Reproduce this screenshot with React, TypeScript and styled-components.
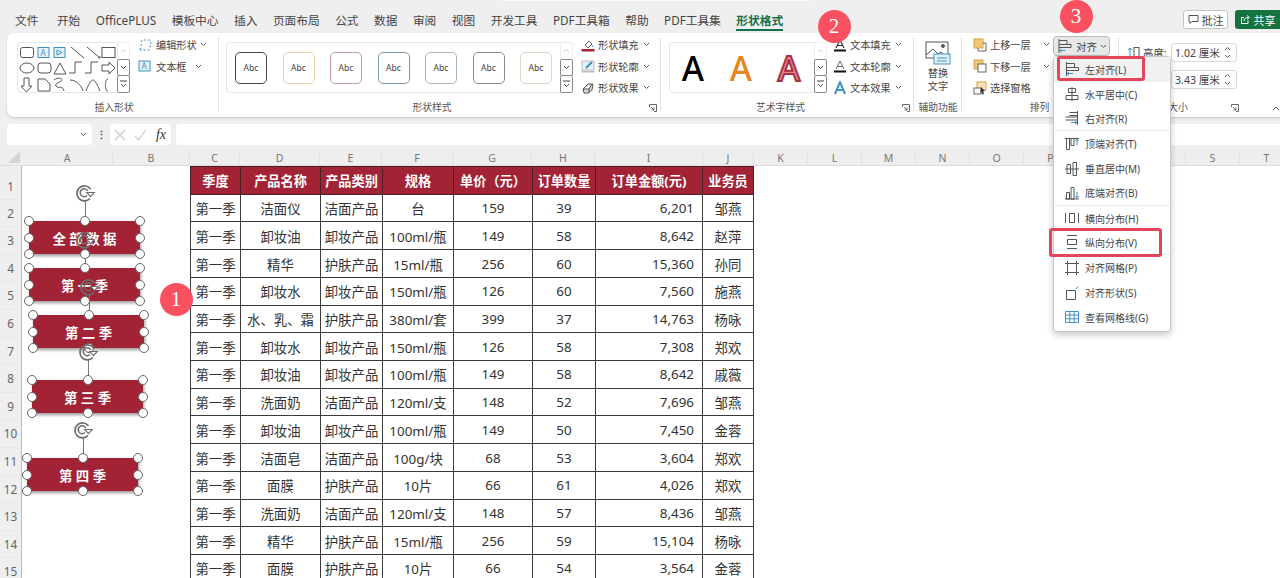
import React from "react";
import styled, { createGlobalStyle } from "styled-components";

const FONT = `"Noto Sans", "Noto Sans CJK SC", sans-serif`;
const TEXT = "#444";
const BLUE = "#3f93c4";
const WINE = "#a12335";

const GlobalStyle = createGlobalStyle`
  html, body { margin: 0; padding: 0; background: #efefef; }
  body { font-family: ${FONT}; color: ${TEXT}; }
  * { box-sizing: border-box; }
`;

const Page = styled.div`
  position: relative;
  width: 1280px;
  height: 578px;
  overflow: hidden;
  background: #efefef;
  display: flex;
  flex-direction: column;
`;

const SearchEdge = styled.div`
  position: absolute;
  left: 502px;
  top: 0;
  width: 308px;
  height: 1px;
  background: #f9f9f9;
`;

/* tabs */
const TabBar = styled.div`
  height: 33px;
  flex: none;
  display: flex;
  align-items: flex-start;
  gap: 15.5px;
  padding: 11px 0 0 15px;
`;

const Tab = styled.div<{ $active?: boolean }>`
  height: 20px;
  font-size: 11.7px;
  line-height: 18px;
  white-space: nowrap;
  font-weight: ${(p) => (p.$active ? 700 : 400)};
  color: ${(p) => (p.$active ? "#13704a" : TEXT)};
  border-bottom: ${(p) => (p.$active ? "2px solid #13704a" : "none")};
  &:first-child {
    margin-right: 3px;
  }
`;

const TopActions = styled.div`
  margin-left: auto;
  display: flex;
  gap: 7px;
  margin-top: -1px;
`;

const CommentButton = styled.div`
  width: 45px;
  height: 19px;
  background: #fff;
  border: 1px solid #c4c4c4;
  border-radius: 3px;
  display: flex;
  align-items: center;
  justify-content: center;
  gap: 3px;
  font-size: 11px;
`;

const ShareButton = styled(CommentButton)`
  background: #14733f;
  border: none;
  border-radius: 3px 0 0 3px;
  color: #fff;
`;

/* ribbon */
const Ribbon = styled.div`
  height: 84px;
  flex: none;
  margin-left: 7px;
  background: #fff;
  border-radius: 7px 0 0 7px;
  box-shadow: 0 1px 2px rgba(0, 0, 0, 0.18);
  display: flex;
  position: relative;
`;

const Group = styled.div<{ $w: number }>`
  position: relative;
  width: ${(p) => p.$w}px;
  flex: none;
  display: flex;
  flex-direction: column;
  &:not(:last-of-type)::after {
    content: "";
    position: absolute;
    right: 0;
    top: 4px;
    bottom: 5px;
    width: 1px;
    background: #e3e3e3;
  }
`;

const GroupBody = styled.div<{ $left: number }>`
  height: 67px;
  flex: none;
  display: flex;
  padding: 1px 0 0 ${(p) => p.$left}px;
`;

const GroupLabel = styled.div<{ $dx?: number }>`
  font-size: 9.8px;
  line-height: 14px;
  padding-top: 1px;
  text-align: center;
  color: #555;
  white-space: nowrap;
  transform: translateX(${(p) => p.$dx ?? 0}px);
`;

const Launcher = styled.svg`
  position: absolute;
  right: 4px;
  bottom: 5px;
`;

const Gallery = styled.div<{ $w: number }>`
  width: ${(p) => p.$w}px;
  height: 51px;
  flex: none;
  margin-top: 8px;
  display: flex;
  justify-content: space-between;
  background: #fff;
  border: 1px solid #e6e6e6;
  border-radius: 4px;
`;

const GalleryItems = styled.div<{ $gap: number; $left: number }>`
  display: flex;
  align-items: center;
  gap: ${(p) => p.$gap}px;
  padding-left: ${(p) => p.$left}px;
`;

const ScrollColumn = styled.div`
  width: 13px;
  flex: none;
  display: flex;
  flex-direction: column;
  margin: -1px -1px -1px 0;
`;

const ScrollButton = styled.div<{ $boxed?: boolean }>`
  flex: 1;
  display: flex;
  align-items: center;
  justify-content: center;
  border: 1px solid ${(p) => (p.$boxed ? "#8a8a8a" : "#eee")};
  margin-top: ${(p) => (p.$boxed ? "-1px" : "0")};
  background: #fff;
  border-radius: 2px;
`;

const Swatch = styled.div<{ $color: string }>`
  width: 32px;
  height: 32px;
  flex: none;
  border: 1.5px solid ${(p) => p.$color};
  border-radius: 5px;
  display: flex;
  align-items: center;
  justify-content: center;
  font-size: 8.6px;
  color: #444;
`;

const ArtLetter = styled.div<{ $fill: string; $stroke?: string }>`
  width: 46px;
  flex: none;
  margin-right: 2px;
  text-align: center;
  font-size: 34px;
  line-height: 48px;
  font-weight: 500;
  color: ${(p) => p.$fill};
  -webkit-text-stroke: ${(p) => (p.$stroke ? `2px ${p.$stroke}` : "0")};
`;

const CommandColumn = styled.div<{ $w: number; $left?: number }>`
  width: ${(p) => p.$w}px;
  flex: none;
  margin-left: ${(p) => p.$left ?? 0}px;
  display: flex;
  flex-direction: column;
`;

const Command = styled.div`
  height: 21.5px;
  display: flex;
  align-items: center;
  gap: 3px;
  font-size: 10.2px;
  white-space: nowrap;
  color: ${TEXT};
`;

const CommandIcon = styled.svg`
  width: 14px;
  height: 14px;
  flex: none;
`;

const Caret = styled.svg<{ $gap?: number }>`
  width: 7px;
  height: 5px;
  flex: none;
  margin-left: ${(p) => p.$gap ?? 0}px;
`;

const AltTextButton = styled.div`
  width: 100%;
  display: flex;
  flex-direction: column;
  align-items: center;
  font-size: 10.2px;
  line-height: 13px;
  padding-top: 7px;
  svg {
    margin-bottom: 2px;
  }
`;

const AlignButton = styled.div`
  width: 57px;
  height: 20px;
  flex: none;
  margin-top: 2px;
  background: #e8e8e8;
  border: 1px solid #b9b9b9;
  border-radius: 4px;
  display: flex;
  align-items: center;
  gap: 3px;
  padding-left: 2px;
  font-size: 10.4px;
`;

const SizeRow = styled.div`
  height: 27px;
  display: flex;
  align-items: center;
  gap: 3px;
  font-size: 10.4px;
  white-space: nowrap;
  &:first-child {
    margin-top: 5px;
  }
`;

const SizeLabel = styled.div`
  width: 25px;
  flex: none;
`;

const SizeInput = styled.div`
  width: 66px;
  height: 19px;
  flex: none;
  border: 1px solid #d9d9d9;
  border-radius: 3px;
  display: flex;
  align-items: center;
  justify-content: space-between;
  padding: 0 5px 0 3px;
  font-size: 10.6px;
`;

const SizeSpinner = styled.svg`
  width: 7px;
  height: 13px;
  flex: none;
`;

const Collapse = styled.svg`
  position: absolute;
  right: 0;
  top: 72px;
`;

/* formula bar */
const FormulaBar = styled.div`
  height: 21px;
  flex: none;
  margin-top: 7px;
  padding-left: 7px;
  display: flex;
  align-items: stretch;
`;

const NameBox = styled.div`
  width: 85px;
  background: #fff;
  border-radius: 4px;
  display: flex;
  align-items: center;
  justify-content: flex-end;
  padding-right: 5px;
`;

const BarDots = styled.div`
  width: 18px;
  display: flex;
  align-items: center;
  justify-content: center;
  font-size: 11px;
  font-weight: 700;
  color: #555;
`;

const FormulaButtons = styled.div`
  width: 61px;
  background: #fff;
  border-radius: 4px;
  display: flex;
  align-items: center;
  justify-content: space-between;
  padding: 0 5px 0 4px;
`;

const FxLabel = styled.span`
  font-family: "Liberation Serif", serif;
  font-style: italic;
  font-size: 14px;
  color: #333;
`;

const FormulaInput = styled.div`
  flex: 1;
  margin-left: 5px;
  background: #fff;
  border-radius: 4px 0 0 4px;
`;

/* sheet */
const ColumnHeaders = styled.div`
  height: 16px;
  flex: none;
  margin-top: 5px;
  display: flex;
  background: #eee;
  border-bottom: 1px solid #ddd;
`;

const Corner = styled.div`
  width: 22px;
  flex: none;
  display: flex;
  align-items: flex-end;
  justify-content: flex-end;
  padding: 0 2px 2px 0;
`;

const ColumnHead = styled.div<{ $w: number }>`
  width: ${(p) => p.$w}px;
  flex: none;
  text-align: center;
  font-size: 10.5px;
  line-height: 17px;
  color: #777;
  border-right: 1px solid #e2e2e2;
`;

const SheetArea = styled.div`
  flex: 1;
  min-height: 0;
  display: flex;
`;

const RowHeaders = styled.div`
  width: 22px;
  flex: none;
  padding-top: 6px;
  background: #efefef;
  border-right: 1px solid #bdbdbd;
`;

const RowHead = styled.div`
  height: 27.6px;
  text-align: center;
  font-size: 11.8px;
  line-height: 27.6px;
  color: #666;
  border-bottom: 1px solid #e7e7e7;
  &:first-child {
    padding-top: 1px;
    line-height: 26px;
  }
`;

const Canvas = styled.div`
  position: relative;
  flex: 1;
  background: #fff;
  overflow: hidden;
`;

const DataTable = styled.table`
  margin-left: 168px;
  border-collapse: collapse;
  table-layout: fixed;
  width: 563px;
  font-size: 13.4px;
  color: #333;
`;

const Row = styled.tr`
  height: 27.72px;
`;

const HeadCell = styled.th`
  padding: 0;
  background: ${WINE};
  color: #fff;
  font-size: 13.2px;
  font-weight: 700;
  text-align: center;
  white-space: nowrap;
  border: 1px solid #4a2026;
`;

const Cell = styled.td<{ $right?: boolean }>`
  padding: ${(p) => (p.$right ? "0 8px 0 0" : "0")};
  text-align: ${(p) => (p.$right ? "right" : "center")};
  white-space: nowrap;
  border: 1px solid #3a3a3a;
`;

/* shapes on the sheet */
const Shape = styled.div<{ $x: number; $y: number }>`
  position: absolute;
  left: ${(p) => p.$x - 22}px;
  top: ${(p) => p.$y - 166}px;
  width: 111px;
  height: 33px;
  background: ${WINE};
  box-shadow: 1px 2px 3px rgba(0, 0, 0, 0.4);
  display: flex;
  align-items: center;
  justify-content: center;
  color: #fff;
  font-size: 13.4px;
  font-weight: 700;
  white-space: pre;
`;

const Handle = styled.span<{ $l: number; $t: number }>`
  position: absolute;
  left: ${(p) => p.$l}%;
  top: ${(p) => p.$t}%;
  width: 10px;
  height: 10px;
  margin: -5px 0 0 -5px;
  background: #fff;
  border: 1.8px solid #666;
  border-radius: 50%;
  z-index: 2;
`;

const Stem = styled.span`
  position: absolute;
  left: 50%;
  top: -21px;
  width: 1px;
  height: 21px;
  background: #777;
`;

const RotateIcon = styled.svg`
  position: absolute;
  left: 50%;
  top: -37px;
  margin-left: -10px;
  width: 23px;
  height: 18px;
  z-index: 3;
`;

/* overlays */
const Marker = styled.div<{ $x: number; $y: number }>`
  position: absolute;
  left: ${(p) => p.$x - 16.5}px;
  top: ${(p) => p.$y - 16.5}px;
  width: 33px;
  height: 33px;
  border-radius: 50%;
  background: #f9515f;
  color: #fff;
  font-family: "Liberation Serif", serif;
  font-size: 21px;
  line-height: 33px;
  text-align: center;
  z-index: 10;
`;

const Menu = styled.div`
  position: absolute;
  left: 1053px;
  top: 56px;
  width: 118px;
  height: 276px;
  background: #fff;
  border: 1px solid #c9c9c9;
  border-radius: 4px;
  box-shadow: 0 3px 7px rgba(0, 0, 0, 0.22);
  z-index: 8;
`;

const MenuItem = styled.div<{ $hover?: boolean; $divider?: boolean }>`
  height: 24.8px;
  display: flex;
  align-items: center;
  gap: 5px;
  padding-left: 10px;
  font-size: 10px;
  white-space: nowrap;
  color: #444;
  background: ${(p) => (p.$hover ? "#f1f1f1" : "transparent")};
  border-bottom: ${(p) => (p.$divider ? "1px solid #eaeaea" : "none")};
`;

const MenuIcon = styled.svg`
  width: 16px;
  height: 16px;
  flex: none;
`;

const RedBox = styled.div<{ $x: number; $y: number; $w: number; $h: number }>`
  position: absolute;
  left: ${(p) => p.$x}px;
  top: ${(p) => p.$y}px;
  width: ${(p) => p.$w}px;
  height: ${(p) => p.$h}px;
  border: 3px solid #e5455a;
  border-radius: 3px;
  z-index: 9;
`;

const Chevron = ({ gap }: { gap?: number }) => (
  <Caret $gap={gap} viewBox="0 0 7 5">
    <path d="M1 1l2.5 2.5L6 1" fill="none" stroke="#555" strokeWidth="1" />
  </Caret>
);

const ShapeIcons = () => (
  <svg width="98" height="50" viewBox="0 0 98 50" fill="none" stroke="#555" strokeWidth="1">
    <rect x="2.5" y="4.5" width="13" height="10" rx="2" />
    <rect x="20" y="4.5" width="11" height="10" stroke={BLUE} fill="#e4f1f8" />
    <text x="22.5" y="12.5" fontSize="8" fill={BLUE} stroke="none" fontFamily="Noto Sans">A</text>
    <rect x="36" y="4.5" width="11" height="10" stroke={BLUE} fill="#e4f1f8" />
    <path d="M39 7l5 2.5-5 2.5z" stroke={BLUE} />
    <path d="M53 4l13 11M69 4l13 11M80 15l2 0 0-2" />
    <rect x="84" y="4.5" width="13" height="10" />
    <ellipse cx="9" cy="25" rx="7" ry="5" />
    <rect x="20" y="20" width="13" height="10" rx="3" />
    <path d="M36 31l6-11 6 11zM51 30h6v-11h7M67 30h6v-11h7M84 22h7v-3l6 6-6 6v-3h-7z" />
    <path d="M6 35h5v8h3l-5.500 6-5.500-6h3zM20 36h7l5 5v7h-12zM36 37c4-3 8-2 8 0s-8 3-6 6 7-1 8 5M52 37c6 0 11 5 13 11M68 48c2-6 5-11 7-11s5 6 7 11M90 36c-3 0-2 5-3 6 1 1 0 6 3 6" />
  </svg>
);

const Launch = () => (
  <Launcher width="8" height="8" viewBox="0 0 8 8" fill="none" stroke="#666" strokeWidth="1">
    <path d="M.5 3V.5H7.500V7.500H5M2 3l3 3M5 3.500V6H2.500" />
  </Launcher>
);

const MoreButtons = () => (
  <ScrollColumn>
    <ScrollButton>
      <svg width="7" height="5" viewBox="0 0 7 5"><path d="M1 4l2.500-2.500L6 4" fill="none" stroke="#ccc" /></svg>
    </ScrollButton>
    <ScrollButton $boxed>
      <svg width="7" height="5" viewBox="0 0 7 5"><path d="M1 1l2.500 2.500L6 1" fill="none" stroke="#444" /></svg>
    </ScrollButton>
    <ScrollButton $boxed>
      <svg width="7" height="8" viewBox="0 0 7 8"><path d="M0 1h7M1 4l2.500 2.500L6 4" fill="none" stroke="#444" /></svg>
    </ScrollButton>
  </ScrollColumn>
);

const swatches = ["#444", "#eccfa8", "#c49aa2", "#7f97a6", "#a9b7ac", "#8a8a8a", "#e3d8c8"];

const icons: Record<string, React.ReactNode> = {
  fill: (
    <>
      <path d="M4 7l4-4 3 3-4 4z" stroke="#666" fill="none" />
      <path d="M11 7l1 2" stroke={BLUE} />
      <rect x="0.500" y="11" width="13" height="2.500" fill="#a12335" />
    </>
  ),
  line: (
    <>
      <rect x="1" y="2" width="12" height="9" fill="#e4f1f8" stroke="#bbb" />
      <path d="M5 9l6-6" stroke={BLUE} strokeWidth="2" />
      <rect x="0.500" y="12" width="13" height="1.500" fill="#bbb" />
    </>
  ),
  effect: <path d="M2 8l5-5h5l-1 6-4 3H3zM2 8h6l3-5M8 8v4" stroke="#555" fill="#ddd" />,
  textFill: (
    <>
      <path d="M3 10L7 2l4 8M4.500 7.500h5" stroke="#333" fill="none" strokeWidth="1.200" />
      <rect x="1" y="11.500" width="12" height="2" fill="#111" />
    </>
  ),
  textLine: (
    <>
      <path d="M3 10L7 2l4 8M4.500 7.500h5" stroke="#666" fill="none" />
      <rect x="1" y="11.500" width="12" height="2" fill="#111" />
    </>
  ),
  textEffect: <path d="M2 13L7 1l5 12M4 9h6" stroke={BLUE} fill="none" strokeWidth="2" />,
  up: (
    <>
      <rect x="1" y="1" width="9" height="9" fill="#f3c674" stroke="#d6a24a" />
      <path d="M10 5h3v8H5v-3" stroke="#666" fill="none" />
    </>
  ),
  down: (
    <>
      <rect x="1" y="1" width="9" height="9" fill="#f3c674" stroke="#d6a24a" />
      <rect x="5" y="5" width="8" height="8" fill="#fff" stroke="#666" />
    </>
  ),
  pane: (
    <>
      <rect x="4" y="1" width="9" height="8" fill="#fbe3b5" stroke="#d6a24a" />
      <rect x="1" y="7" width="7" height="6" fill="#fff" stroke="#666" />
      <path d="M8 6l4 4-2 .5 1 2.500-1.500 .5-1-2.500-1 1z" fill="#333" />
    </>
  ),
};

const CommandRow = ({ icon, label, gap }: { icon: string; label: string; gap: number }) => (
  <Command>
    <CommandIcon viewBox="0 0 14 14">{icons[icon]}</CommandIcon>
    {label}
    <Chevron gap={gap} />
  </Command>
);

const menuItems: { label: string; d: string; blue: string; divider?: boolean }[] = [
  { label: "左对齐(L)", d: "M2.500 1v14M2.500 2.500h8v4h-8M2.500 6.500h12v3h-12", blue: "M3 12.500h6M3 12.500l2-1.500M3 12.500l2 1.500" },
  { label: "水平居中(C)", d: "M8 1v14M4.500 2.500h7v4h-7zM2 9.500h12v4H2z", blue: "" },
  { label: "右对齐(R)", d: "M13.500 1v14M5.500 2.500h8v3h-8M1.500 7h12v3h-12", blue: "M7 12.500h6M13 12.500l-2-1.500M13 12.500l-2 1.500", divider: true },
  { label: "顶端对齐(T)", d: "M1 2.500h14M2.500 2.500h3v11h-3zM7 2.500h3v7H7z", blue: "M13 3v6M13 3l-1.500 2M13 3l1.500 2" },
  { label: "垂直居中(M)", d: "M1 8h14M3 3.500h3.500v9H3zM9 1.500h3.500v13H9z", blue: "" },
  { label: "底端对齐(B)", d: "M1 14h14M2.500 7.500h3v6.500h-3zM7 2.500h3v11.500H7z", blue: "M13 7v6M13 13l-1.500-2M13 13l1.500-2", divider: true },
  { label: "横向分布(H)", d: "M1.500 3v10M14.500 3v10M5.500 3.500h5v9h-5z", blue: "" },
  { label: "纵向分布(V)", d: "M3 1.500h10M3 14.500h10M3.500 5.500h9v5h-9z", blue: "", divider: true },
  { label: "对齐网格(P)", d: "M3.500 1v14M12.500 1v14M1 3.500h14M1 12.500h14", blue: "" },
  { label: "对齐形状(S)", d: "M2.500 5.500h9v9h-9z", blue: "M12 4l2-2.500" },
  { label: "查看网格线(G)", d: "", blue: "M1.500 2.500h13v11h-13zM1.500 6h13M1.500 9.800h13M5.800 2.500v11M10.200 2.500v11" },
];

// Q and R sit behind the open menu
const columns: [string, number][] = [
  ["A", 91], ["B", 77], ["C", 50], ["D", 80], ["E", 62], ["F", 71], ["G", 79], ["H", 63], ["I", 108], ["J", 51],
  ["K", 54], ["L", 54], ["M", 54], ["N", 54], ["O", 54], ["P", 54], ["", 54], [" ", 54], ["S", 54], ["T", 54],
];

const heads = ["季度", "产品名称", "产品类别", "规格", "单价（元）", "订单数量", "订单金额(元)", "业务员"];

const rows = [
  ["洁面仪", "洁面产品", "台", "159", "39", "6,201", "邹燕"],
  ["卸妆油", "卸妆产品", "100ml/瓶", "149", "58", "8,642", "赵萍"],
  ["精华", "护肤产品", "15ml/瓶", "256", "60", "15,360", "孙同"],
  ["卸妆水", "卸妆产品", "150ml/瓶", "126", "60", "7,560", "施燕"],
  ["水、乳、霜", "护肤产品", "380ml/套", "399", "37", "14,763", "杨咏"],
  ["卸妆水", "卸妆产品", "150ml/瓶", "126", "58", "7,308", "郑欢"],
  ["卸妆油", "卸妆产品", "100ml/瓶", "149", "58", "8,642", "戚薇"],
  ["洗面奶", "洁面产品", "120ml/支", "148", "52", "7,696", "邹燕"],
  ["卸妆油", "卸妆产品", "100ml/瓶", "149", "50", "7,450", "金蓉"],
  ["洁面皂", "洁面产品", "100g/块", "68", "53", "3,604", "郑欢"],
  ["面膜", "护肤产品", "10片", "66", "61", "4,026", "郑欢"],
  ["洗面奶", "洁面产品", "120ml/支", "148", "57", "8,436", "邹燕"],
  ["精华", "护肤产品", "15ml/瓶", "256", "59", "15,104", "杨咏"],
  ["面膜", "护肤产品", "10片", "66", "54", "3,564", "金蓉"],
];

const shapes = [
  { x: 29, y: 221, text: "全 部 数 据" },
  { x: 29, y: 268, text: "第 一 季" },
  { x: 33, y: 315, text: "第 二 季" },
  { x: 32, y: 380, text: "第 三 季" },
  { x: 27, y: 458, text: "第 四 季" },
];

const handles = [
  [0, 0], [50, 0], [100, 0], [0, 50], [100, 50], [0, 100], [50, 100], [100, 100],
];

const RotateGlyph = () => (
  <RotateIcon viewBox="0 0 23 18" fill="none">
    <path d="M15 14.500A7.500 7.500 0 1 1 15.500 5" stroke="#6d6d6d" strokeWidth="1.700" />
    <path d="M12 11.500A4 4 0 1 1 12.800 7" stroke="#6d6d6d" strokeWidth="1.500" />
    <path d="M10.500 8h10l-5 5.500z" fill="#6d6d6d" />
    <path d="M13 9h5l-2.500 2.700z" fill="#fff" />
  </RotateIcon>
);

export default function App() {
  return (
    <Page>
      <GlobalStyle />
      <SearchEdge />
      <TabBar>
        {["文件", "开始", "OfficePLUS", "模板中心", "插入", "页面布局", "公式", "数据", "审阅", "视图", "开发工具", "PDF工具箱", "帮助", "PDF工具集"].map((t) => (
          <Tab key={t}>{t}</Tab>
        ))}
        <Tab $active>形状格式</Tab>
        <TopActions>
          <CommentButton>
            <svg width="11" height="11" viewBox="0 0 11 11" fill="none" stroke="#555"><path d="M1 1.500h9v6H4L2 9.500v-2H1z" /></svg>
            批注
          </CommentButton>
          <ShareButton>
            <svg width="11" height="11" viewBox="0 0 11 11" fill="none" stroke="#fff"><path d="M8 6.500v3H1.500V3.500H4M4 7c0-2.500 2-3.500 4-3.500M7 1.500l2.500 2L7 5.500" /></svg>
            共享
          </ShareButton>
        </TopActions>
      </TabBar>

      <Ribbon>
        <Group $w={212}>
          <GroupBody $left={10}>
            <Gallery $w={113}>
              <ShapeIcons />
              <MoreButtons />
            </Gallery>
            <CommandColumn $w={80} $left={7}>
              <Command>
                <svg width="16" height="14" viewBox="0 0 16 14" fill="none" stroke="#555">
                  <path d="M3 12L5 2h8l1 4-2 6z" strokeDasharray="2 2" stroke={BLUE} />
                </svg>
                编辑形状
                <Chevron />
              </Command>
              <Command>
                <svg width="16" height="14" viewBox="0 0 16 14" fill="none" stroke={BLUE}>
                  <rect x="2" y="2" width="11" height="10" fill="#e4f1f8" />
                  <text x="4.500" y="10" fontSize="8" fill={BLUE} stroke="none" fontFamily="Noto Sans">A</text>
                </svg>
                文本框
                <Chevron gap={5} />
              </Command>
            </CommandColumn>
          </GroupBody>
          <GroupLabel $dx={1}>插入形状</GroupLabel>
        </Group>

        <Group $w={442}>
          <GroupBody $left={7}>
            <Gallery $w={347}>
              <GalleryItems $gap={15.500} $left={8}>
                {swatches.map((c, i) => (
                  <Swatch key={i} $color={c}>Abc</Swatch>
                ))}
              </GalleryItems>
              <MoreButtons />
            </Gallery>
            <CommandColumn $w={80} $left={8}>
              <CommandRow icon="fill" label="形状填充" gap={1} />
              <CommandRow icon="line" label="形状轮廓" gap={1} />
              <CommandRow icon="effect" label="形状效果" gap={1} />
            </CommandColumn>
          </GroupBody>
          <GroupLabel $dx={-8}>形状样式</GroupLabel>
          <Launch />
        </Group>

        <Group $w={253}>
          <GroupBody $left={8}>
            <Gallery $w={157}>
              <GalleryItems $gap={0} $left={0}>
                <ArtLetter $fill="#000">A</ArtLetter>
                <ArtLetter $fill="#e8861e">A</ArtLetter>
                <ArtLetter $fill="#e58a94" $stroke="#a93043">A</ArtLetter>
              </GalleryItems>
              <MoreButtons />
            </Gallery>
            <CommandColumn $w={80} $left={7}>
              <CommandRow icon="textFill" label="文本填充" gap={1} />
              <CommandRow icon="textLine" label="文本轮廓" gap={1} />
              <CommandRow icon="textEffect" label="文本效果" gap={1} />
            </CommandColumn>
          </GroupBody>
          <GroupLabel $dx={-7}>艺术字样式</GroupLabel>
          <Launch />
        </Group>

        <Group $w={48}>
          <GroupBody $left={0}>
            <AltTextButton>
              <svg width="27" height="24" viewBox="0 0 27 24" fill="none" stroke="#555">
                <rect x="1" y="1" width="22" height="16" fill="#fff" />
                <path d="M1 14l7-6 5 5 3-2 3 3" />
                <circle cx="18" cy="5" r="1.500" fill="#555" />
                <rect x="9" y="13" width="16" height="10" fill="#e4f1f8" stroke={BLUE} />
                <path d="M12 17h10M12 20h10" stroke={BLUE} />
              </svg>
              <span>替换</span>
              <span>文字</span>
            </AltTextButton>
          </GroupBody>
          <GroupLabel>辅助功能</GroupLabel>
        </Group>

        <Group $w={157}>
          <GroupBody $left={11}>
            <CommandColumn $w={80}>
              <CommandRow icon="up" label="上移一层" gap={9} />
              <CommandRow icon="down" label="下移一层" gap={9} />
              <Command>
                <CommandIcon viewBox="0 0 14 14">{icons.pane}</CommandIcon>
                选择窗格
              </Command>
            </CommandColumn>
            <AlignButton>
              <svg width="17" height="16" viewBox="0 0 16 16" fill="none" stroke="#555">
                <path d="M2.500 1v14M2.500 2.500h8v4h-8M2.500 6.500h12v3h-12" />
                <path d="M3 12.500h6M3 12.500l2-1.500M3 12.500l2 1.500" stroke={BLUE} />
              </svg>
              对齐
              <Chevron />
            </AlignButton>
          </GroupBody>
          <GroupLabel $dx={-1}>排列</GroupLabel>
        </Group>

        <Group $w={124}>
          <GroupBody $left={8}>
            <CommandColumn $w={116}>
              <SizeRow>
                <svg width="13" height="14" viewBox="0 0 13 14" fill="none" stroke="#555">
                  <path d="M3 2v10M1 4l2-2 2 2M1 10l2 2 2-2" stroke={BLUE} />
                  <rect x="7" y="1.500" width="5" height="11" />
                </svg>
                <SizeLabel>高度:</SizeLabel>
                <SizeInput>
                  1.02 厘米
                  <SizeSpinner viewBox="0 0 7 13"><path d="M1 4l2.500-2.500L6 4M1 9l2.500 2.500L6 9" fill="none" stroke="#555" /></SizeSpinner>
                </SizeInput>
              </SizeRow>
              <SizeRow>
                <svg width="13" height="14" viewBox="0 0 13 14" fill="none" stroke="#555">
                  <rect x="1.500" y="1.500" width="10" height="5" />
                  <path d="M1 10h11M3 8l-2 2 2 2M10 8l2 2-2 2" stroke={BLUE} />
                </svg>
                <SizeLabel />
                <SizeInput>
                  3.43 厘米
                  <SizeSpinner viewBox="0 0 7 13"><path d="M1 4l2.500-2.500L6 4M1 9l2.500 2.500L6 9" fill="none" stroke="#555" /></SizeSpinner>
                </SizeInput>
              </SizeRow>
            </CommandColumn>
          </GroupBody>
          <GroupLabel $dx={-3}>大小</GroupLabel>
          <Launch />
        </Group>
        <Collapse width="8" height="6" viewBox="0 0 8 6">
          <path d="M1 5l3-3 3 3" fill="none" stroke="#555" />
        </Collapse>
      </Ribbon>

      <FormulaBar>
        <NameBox><Chevron /></NameBox>
        <BarDots>⋮</BarDots>
        <FormulaButtons>
          <svg width="12" height="12" viewBox="0 0 12 12"><path d="M1 1l10 10M11 1L1 11" stroke="#ccc" strokeWidth="1.200" /></svg>
          <svg width="13" height="12" viewBox="0 0 13 12"><path d="M1 7l3.500 4L12 1" fill="none" stroke="#ccc" strokeWidth="1.200" /></svg>
          <FxLabel>fx</FxLabel>
        </FormulaButtons>
        <FormulaInput />
      </FormulaBar>

      <ColumnHeaders>
        <Corner>
          <svg width="12" height="12" viewBox="0 0 12 12"><path d="M12 0v12H0z" fill="#d5d5d5" /></svg>
        </Corner>
        {columns.map(([name, w], i) => (
          <ColumnHead key={i} $w={w}>{name}</ColumnHead>
        ))}
      </ColumnHeaders>

      <SheetArea>
        <RowHeaders>
          {Array.from({ length: 15 }, (_, i) => (
            <RowHead key={i}>{i + 1}</RowHead>
          ))}
        </RowHeaders>
        <Canvas>
          <DataTable>
            <colgroup>
              {[50, 80, 62, 71, 79, 63, 107, 51].map((w, i) => (
                <col key={i} width={w} />
              ))}
            </colgroup>
            <thead>
              <Row>
                {heads.map((h) => (
                  <HeadCell key={h}>{h}</HeadCell>
                ))}
              </Row>
            </thead>
            <tbody>
              {rows.map((r, i) => (
                <Row key={i}>
                  <Cell>第一季</Cell>
                  {r.map((v, j) => (
                    <Cell key={j} $right={j === 5}>{v}</Cell>
                  ))}
                </Row>
              ))}
            </tbody>
          </DataTable>
          {shapes.map((s) => (
            <Shape key={s.text} $x={s.x} $y={s.y}>
              {s.text}
              <Stem />
              <RotateGlyph />
              {handles.map(([l, t]) => (
                <Handle key={`${l}-${t}`} $l={l} $t={t} />
              ))}
            </Shape>
          ))}
        </Canvas>
      </SheetArea>

      <Marker $x={176} $y={299}>1</Marker>
      <Marker $x={834} $y={26}>2</Marker>
      <Marker $x={1076} $y={16}>3</Marker>

      <Menu>
        {menuItems.map((m, i) => (
          <MenuItem key={m.label} $hover={i === 0} $divider={m.divider}>
            <MenuIcon viewBox="0 0 16 16" fill="none">
              {m.d && <path d={m.d} stroke="#555" />}
              {m.blue && <path d={m.blue} stroke={BLUE} />}
            </MenuIcon>
            {m.label}
          </MenuItem>
        ))}
      </Menu>
      <RedBox $x={1057} $y={56} $w={88} $h={25} />
      <RedBox $x={1049} $y={228} $w={113} $h={29} />
    </Page>
  );
}
